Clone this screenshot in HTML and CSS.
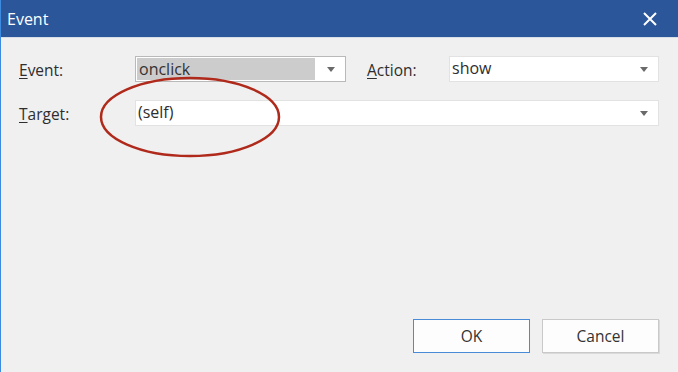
FILE: index.html
```html
<!DOCTYPE html>
<html>
<head>
<meta charset="utf-8">
<link rel="stylesheet" href="styles.css">
</head>
<body>
<div class="window">
  <div class="titlebar">
    <span class="title">Event</span>
    <svg class="close" width="14" height="14" viewBox="0 0 14 14"><path d="M1 1L13 13M13 1L1 13" stroke="#fff" stroke-width="2" fill="none"/></svg>
  </div>
  <div class="content">
    <div class="form">
      <label class="lbl"><u>E</u>vent:</label>
      <div class="combo combo-event">
        <span class="sel">onclick</span>
        <span class="arrow-cell"><span class="arrow"></span></span>
      </div>
      <label class="lbl lbl-action"><u>A</u>ction:</label>
      <div class="combo">
        <span class="val">show</span>
        <span class="arrow-cell"><span class="arrow"></span></span>
      </div>
      <label class="lbl"><u>T</u>arget:</label>
      <div class="combo combo-wide">
        <span class="val">(self)</span>
        <span class="arrow-cell"><span class="arrow"></span></span>
      </div>
    </div>
    <div class="footer">
      <button class="btn btn-default">OK</button>
      <button class="btn">Cancel</button>
    </div>
  </div>
  <svg class="mark" width="184" height="84" viewBox="0 0 184 84"><ellipse cx="92" cy="42" rx="89" ry="39" fill="none" stroke="#b02a1c" stroke-width="2.5"/></svg>
</div>
</body>
</html>
```
FILE: styles.css
```css
html, body {
  margin: 0;
  padding: 0;
}
body {
  background: #f0f0f0;
  font-family: "Open Sans", "Noto Sans", sans-serif;
}
.window {
  position: relative;
  width: 678px;
  height: 372px;
  box-sizing: border-box;
  border-left: 1px solid #3d8be0;
  background: #f0f0f0;
  display: flex;
  flex-direction: column;
  overflow: hidden;
}
.titlebar {
  height: 37px;
  flex: none;
  background: #2b579a;
  border-bottom: 1px solid #d8dee8;
  display: flex;
  align-items: center;
  justify-content: space-between;
  padding: 0 21px 0 6px;
  box-sizing: content-box;
}
.title {
  color: #fff;
  font-size: 16px;
  line-height: 20px;
  margin-top: 1px;
}
.close {
  display: block;
}
.content {
  flex: 1;
  display: flex;
  flex-direction: column;
  justify-content: space-between;
  padding: 18px 19px 19px 18px;
}
.form {
  display: grid;
  grid-template-columns: 116px 211px 103px 210px;
  grid-auto-rows: 26px;
  row-gap: 18px;
  align-items: center;
}
.lbl {
  font-size: 15.5px;
  color: #2e2e2e;
  line-height: 26px;
  margin-top: 2px;
}
.lbl u {
  text-decoration-thickness: 1px;
  text-underline-offset: 2px;
}
.lbl-action {
  padding-left: 21px;
}
.combo {
  height: 26px;
  box-sizing: border-box;
  border: 1px solid #e2e2e2;
  background: #fff;
  display: flex;
  align-items: stretch;
  font-size: 16px;
  color: #2e2e2e;
}
.combo-event {
  border-color: #b9b9b9;
  padding: 1px;
}
.combo-wide {
  grid-column: 2 / 5;
}
.sel {
  flex: 1;
  background: #cccccc;
  padding-left: 2px;
  line-height: 22px;
  color: #333;
}
.val {
  flex: 1;
  padding-left: 2px;
  line-height: 23px;
}
.arrow-cell {
  width: 30px;
  display: flex;
  align-items: center;
  justify-content: center;
}
.combo-event .arrow-cell {
  width: 29px;
}
.arrow {
  width: 0;
  height: 0;
  border-left: 4px solid transparent;
  border-right: 4px solid transparent;
  border-top: 5px solid #6a6a6a;
  margin-left: 2px;
  margin-top: 1px;
}
.footer {
  display: flex;
  justify-content: flex-end;
  gap: 12px;
}
.btn {
  width: 117px;
  height: 34px;
  box-sizing: border-box;
  background: #fdfdfd;
  border: 1px solid #c9c9c9;
  box-shadow: 1px 1px 0 #dadada;
  font-family: "Open Sans", "Noto Sans", sans-serif;
  font-size: 15.5px;
  color: #333;
  padding: 0;
}
.btn-default {
  border-color: #4a8ad6;
  box-shadow: none;
}
.mark {
  position: absolute;
  left: 97px;
  top: 75px;
}
```
